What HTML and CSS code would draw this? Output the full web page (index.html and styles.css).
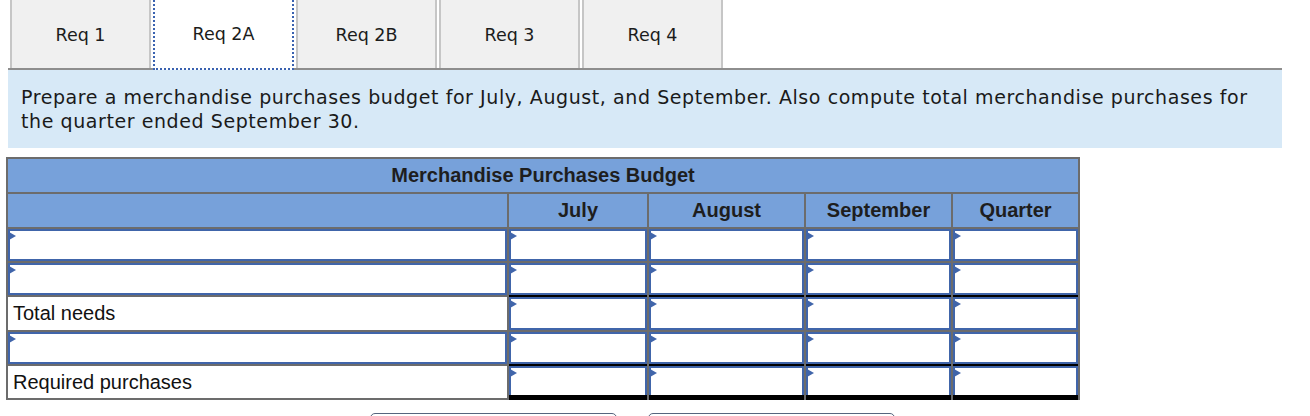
FILE: index.html
```html
<!DOCTYPE html>
<html>
<head>
<meta charset="utf-8">
<link rel="stylesheet" href="styles.css">
</head>
<body>
<div class="tabs">
  <div class="tab">Req 1</div>
  <div class="tab active">Req 2A</div>
  <div class="tab">Req 2B</div>
  <div class="tab">Req 3</div>
  <div class="tab">Req 4</div>
</div>
<div class="instr">Prepare a merchandise purchases budget for July, August, and September. Also compute total merchandise purchases for the quarter ended September 30.</div>
<div class="budget">
  <div class="hd title">Merchandise Purchases Budget</div>
  <div class="hd"></div>
  <div class="hd">July</div>
  <div class="hd">August</div>
  <div class="hd">September</div>
  <div class="hd">Quarter</div>

  <div class="inp"></div>
  <div class="inp"></div>
  <div class="inp"></div>
  <div class="inp"></div>
  <div class="inp"></div>

  <div class="inp"></div>
  <div class="inp line"></div>
  <div class="inp line"></div>
  <div class="inp line"></div>
  <div class="inp line"></div>

  <div class="lbl">Total needs</div>
  <div class="inp"></div>
  <div class="inp"></div>
  <div class="inp"></div>
  <div class="inp"></div>

  <div class="inp"></div>
  <div class="inp line"></div>
  <div class="inp line"></div>
  <div class="inp line"></div>
  <div class="inp line"></div>

  <div class="lbl">Required purchases</div>
  <div class="inp dbl"></div>
  <div class="inp dbl"></div>
  <div class="inp dbl"></div>
  <div class="inp dbl"></div>
</div>
<div class="nav">
  <div class="btn"></div>
  <div class="btn"></div>
</div>
</body>
</html>
```

FILE: styles.css
```css
html, body {
  margin: 0;
  padding: 0;
  background: #fff;
  overflow: hidden;
}
body {
  width: 1310px;
  height: 416px;
  font-family: "DejaVu Sans", Verdana, sans-serif;
  color: #1c1c1c;
}
.tabs {
  display: flex;
  padding-left: 10px;
  height: 68px;
}
.tab {
  box-sizing: border-box;
  width: 141px;
  margin-right: 2px;
  height: 68px;
  background: #f0f0f0;
  border-left: 2px solid #c6c6c6;
  border-right: 2px solid #c6c6c6;
  display: flex;
  align-items: center;
  justify-content: center;
  font-size: 17.5px;
  color: #1c1c1c;
  padding-top: 2px;
}
.tab.active {
  background: #fff;
  border: 2px dotted #3a62b0;
  border-top: none;
  height: 70px;
  position: relative;
  z-index: 2;
  padding-top: 0;
}
.instr {
  box-sizing: border-box;
  margin-left: 8px;
  width: 1274px;
  border-top: 2px solid #8e8e8e;
  background: #d7e9f7;
  padding: 15px 13px 15px;
  font-size: 19px;
  letter-spacing: 0.58px;
  line-height: 24px;
  color: #1a1a1a;
}
.budget {
  margin: 9px 0 0 6px;
  display: grid;
  grid-template-columns: 499px 138px 155px 145px 125px;
  grid-template-rows: 33px 33px 32px 32px 33px 32px 32px;
  gap: 2px;
  padding: 2px;
  background: #6c6c6c;
  width: max-content;
  font-family: "Liberation Sans", Arial, sans-serif;
}
.hd {
  background: #77a1da;
  font-weight: bold;
  font-size: 20px;
  color: #1e1e1e;
  display: flex;
  align-items: center;
  justify-content: center;
}
.hd.title {
  grid-column: 1 / 6;
}
.lbl {
  background: #fff;
  display: flex;
  align-items: center;
  padding-left: 5px;
  font-size: 20px;
  color: #111;
}
.inp {
  background: #fff;
  box-shadow: inset 0 0 0 2px #4065aa;
  position: relative;
}
.inp::before {
  content: "";
  position: absolute;
  left: 1px;
  top: 3px;
  border-left: 7px solid #4065aa;
  border-top: 4px solid transparent;
  border-bottom: 4px solid transparent;
}
.inp.line {
  box-shadow: inset 0 0 0 2px #4065aa, 0 2px 0 #000;
}
.inp.dbl {
  box-shadow: inset 0 -3px 0 #000, inset 0 0 0 2px #4065aa, 0 2px 0 #000;
}
.nav {
  display: flex;
  gap: 31px;
  padding-left: 370px;
  margin-top: 13px;
}
.btn {
  box-sizing: border-box;
  width: 247px;
  height: 40px;
  border: 1px solid #56657e;
  border-radius: 5px;
  background: #fff;
}
```
